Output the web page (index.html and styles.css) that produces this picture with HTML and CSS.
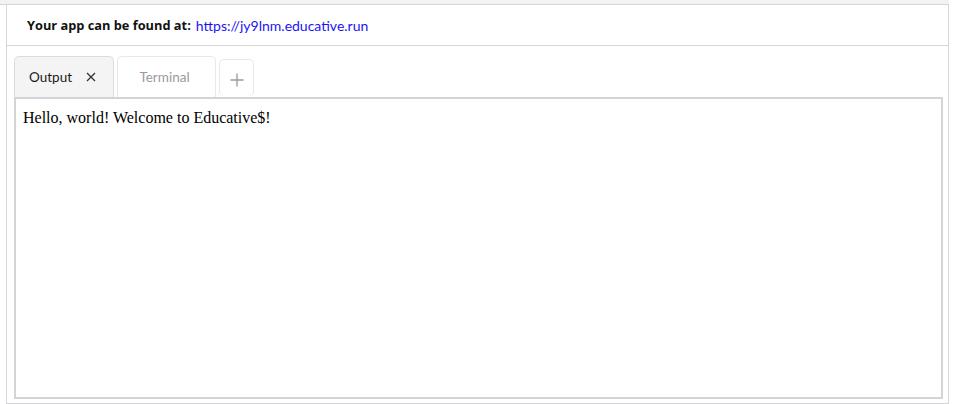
FILE: index.html
```html
<!DOCTYPE html>
<html>
<head>
<meta charset="utf-8">
<link rel="stylesheet" href="styles.css">
</head>
<body>
<div class="topstrip"></div>
<div class="panel">
  <div class="appbar">
    <span class="label">Your app can be found at:</span>
    <a class="applink" href="#">https://jy9lnm.educative.run</a>
  </div>
  <div class="tabs">
    <div class="tab active">
      <span>Output</span>
      <svg class="close" width="10" height="10" viewBox="0 0 10 10"><path d="M1 1L9 9M9 1L1 9" stroke="#333" stroke-width="1.3" fill="none"/></svg>
    </div>
    <div class="tab inactive">Terminal</div>
    <div class="tab add">
      <svg width="14" height="14" viewBox="0 0 14 14"><path d="M7 0.5V13.5M0.5 7H13.5" stroke="#999" stroke-width="1.3" fill="none"/></svg>
    </div>
  </div>
  <div class="output">Hello, world! Welcome to Educative$!</div>
</div>
</body>
</html>
```
FILE: styles.css
```css
html, body {
  margin: 0;
  padding: 0;
  background: #ffffff;
  overflow: hidden;
}
.topstrip {
  height: 4px;
  background: #f3f3f3;
  border-bottom: 1px solid #d6d6da;
  margin-right: 7px;
}
.panel {
  margin-left: 6px;
  box-sizing: border-box;
  width: 943px;
  border-left: 1px solid #d6d6da;
  border-right: 1px solid #d6d6da;
  border-bottom: 1px solid #d6d6da;
  height: 399px;
  font-family: "Lato", "Open Sans", sans-serif;
}
.appbar {
  height: 41px;
  box-sizing: border-box;
  border-bottom: 1px solid #d6d6da;
  padding-left: 20px;
  display: flex;
  align-items: center;
  font-size: 14px;
  gap: 5px;
}
.label {
  font-family: "Open Sans", "Lato", sans-serif;
  font-weight: 700;
  font-size: 12.8px;
  color: #111;
}
.applink {
  color: #1a14f5;
  text-decoration: none;
}
.tabs {
  display: flex;
  align-items: flex-end;
  gap: 3px;
  padding-left: 7px;
  margin-top: 10px;
}
.tab {
  box-sizing: border-box;
  border: 1px solid #dcdcdf;
  border-bottom: none;
  border-radius: 5px 5px 0 0;
  display: flex;
  align-items: center;
  font-size: 13.5px;
}
.tab.active {
  width: 100px;
  height: 41px;
  background: #f4f4f4;
  padding-left: 14px;
  color: #1a1a1a;
  gap: 14px;
}
.tab.inactive {
  width: 99px;
  height: 41px;
  background: #fff;
  justify-content: center;
  color: #9a9a9e;
  border-color: #e8e8ea;
  padding-right: 4px;
}
.tab.add {
  width: 35px;
  height: 37px;
  justify-content: center;
  border-color: #e8e8ea;
  border-radius: 5px;
  margin-bottom: 1px;
  padding-top: 3px;
}
.close {
  display: block;
}
.output {
  margin-left: 7px;
  width: 929px;
  height: 302px;
  box-sizing: border-box;
  border: 2px solid #d4d4d8;
  padding: 10px 7px;
  font-family: "Liberation Serif", serif;
  font-size: 16px;
  color: #000;
}
```
